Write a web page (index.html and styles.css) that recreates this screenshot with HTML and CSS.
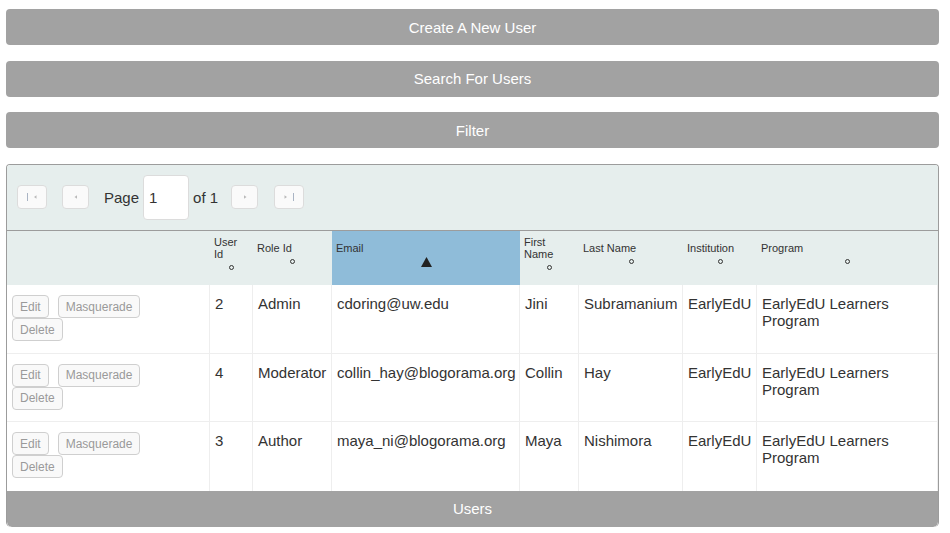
FILE: index.html
```html
<!DOCTYPE html>
<html>
<head>
<meta charset="utf-8">
<title>Users</title>
<link rel="stylesheet" href="styles.css">
</head>
<body>
<div class="page">
  <button class="bar">Create A New User</button>
  <button class="bar">Search For Users</button>
  <button class="bar">Filter</button>
  <div class="grid">
    <div class="pager">
      <button class="pg pg-end"><svg width="14" height="10" viewBox="0 0 14 10"><rect x="2" y="1" width="1" height="8" fill="#a9b4c4"/><path d="M9 5 L11.5 3.3 L11.5 6.7 Z" fill="#b9b9b9"/></svg></button>
      <button class="pg pg-step"><svg width="6" height="10" viewBox="0 0 6 10"><path d="M1.5 5 L4 3.3 L4 6.7 Z" fill="#b9b9b9"/></svg></button>
      <span class="pg-text">Page</span>
      <input class="pg-input" type="text" value="1">
      <span class="pg-text pg-of">of 1</span>
      <button class="pg pg-step pg-next"><svg width="6" height="10" viewBox="0 0 6 10"><path d="M4.5 5 L2 3.3 L2 6.7 Z" fill="#b9b9b9"/></svg></button>
      <button class="pg pg-end pg-last"><svg width="14" height="10" viewBox="0 0 14 10"><path d="M5 5 L2.5 3.3 L2.5 6.7 Z" fill="#b9b9b9"/><rect x="11" y="1" width="1" height="8" fill="#a9b4c4"/></svg></button>
    </div>
    <table class="users">
      <colgroup>
        <col class="c-act"><col class="c-uid"><col class="c-rid"><col class="c-email"><col class="c-first"><col class="c-last"><col class="c-inst"><col class="c-prog">
      </colgroup>
      <thead>
        <tr class="head">
          <th></th>
          <th><span class="lbl">User Id</span><span class="sort"><i class="dot"></i></span></th>
          <th><span class="lbl">Role Id</span><span class="sort"><i class="dot"></i></span></th>
          <th class="sorted"><span class="lbl">Email</span><span class="sort"><svg class="tri" width="11" height="10" viewBox="0 0 11 10"><path d="M5.5 0 L11 10 L0 10 Z" fill="#222"/></svg></span></th>
          <th><span class="lbl">First Name</span><span class="sort"><i class="dot"></i></span></th>
          <th><span class="lbl">Last Name</span><span class="sort"><i class="dot"></i></span></th>
          <th><span class="lbl">Institution</span><span class="sort"><i class="dot"></i></span></th>
          <th><span class="lbl">Program</span><span class="sort"><i class="dot"></i></span></th>
        </tr>
      </thead>
      <tbody>
        <tr>
          <td><div class="acts"><div class="acts-line"><button class="sm">Edit</button><button class="sm">Masquerade</button></div><div class="acts-line"><button class="sm">Delete</button></div></div></td>
          <td>2</td><td>Admin</td><td>cdoring@uw.edu</td><td>Jini</td><td>Subramanium</td><td>EarlyEdU</td><td>EarlyEdU Learners Program</td>
        </tr>
        <tr>
          <td><div class="acts"><div class="acts-line"><button class="sm">Edit</button><button class="sm">Masquerade</button></div><div class="acts-line"><button class="sm">Delete</button></div></div></td>
          <td>4</td><td>Moderator</td><td>collin_hay@blogorama.org</td><td>Collin</td><td>Hay</td><td>EarlyEdU</td><td>EarlyEdU Learners Program</td>
        </tr>
        <tr>
          <td><div class="acts"><div class="acts-line"><button class="sm">Edit</button><button class="sm">Masquerade</button></div><div class="acts-line"><button class="sm">Delete</button></div></div></td>
          <td>3</td><td>Author</td><td>maya_ni@blogorama.org</td><td>Maya</td><td>Nishimora</td><td>EarlyEdU</td><td>EarlyEdU Learners Program</td>
        </tr>
      </tbody>
    </table>
    <div class="foot">Users</div>
  </div>
</div>
</body>
</html>
```
FILE: styles.css
```css
* { box-sizing: border-box; }
html, body { margin: 0; background: #fff; }
body {
  font-family: "Liberation Sans", Arial, sans-serif;
  color: #333;
}
.page {
  padding: 9px 11px 0 6px;
  display: flex;
  flex-direction: column;
  gap: 15.5px;
}
.bar {
  height: 36px;
  background: #a2a2a2;
  color: #fff;
  border: 0;
  border-radius: 4px;
  font: 15px "Liberation Sans", Arial, sans-serif;
  padding: 0;
}
.grid {
  border: 1px solid #9c9c9c;
  border-bottom: 0;
  border-radius: 4px 4px 5px 5px;
  overflow: hidden;
  margin-top: 0.5px;
}
.pager {
  background: #e6eeed;
  height: 66px;
  padding: 10px 0 11px 10px;
  border-bottom: 1px solid #9c9c9c;
  display: flex;
  align-items: center;
}
.pg {
  height: 24px;
  border: 1px solid #dcdcdc;
  background: #fafafa;
  border-radius: 4px;
  padding: 0;
  display: flex;
  align-items: center;
  justify-content: center;
}
.pg-end { width: 30px; }
.pg-step { width: 27px; margin-left: 15px; }
.pg-next { margin-left: 13px; }
.pg-last { margin-left: 16px; }
.pg-text {
  font-size: 15px;
  color: #333;
  margin-left: 15px;
}
.pg-of { margin-left: 4px; }
.pg-input {
  width: 46px;
  height: 45px;
  margin-left: 4px;
  border: 1px solid #dcdcdc;
  border-radius: 4px;
  background: #fff;
  font: 15px "Liberation Sans", Arial, sans-serif;
  color: #333;
  padding: 0 0 0 5px;
  outline: none;
  align-self: stretch;
}
.users {
  width: 931px;
  table-layout: fixed;
  border-collapse: separate;
  border-spacing: 0;
}
.c-act { width: 203px; }
.c-uid { width: 43px; }
.c-rid { width: 79px; }
.c-email { width: 188px; }
.c-first { width: 59px; }
.c-last { width: 104px; }
.c-inst { width: 74px; }
.c-prog { width: 181px; }
.head { height: 54px; background: #e6eeed; }
.head th {
  font-weight: normal;
  font-size: 11px;
  line-height: 12px;
  text-align: left;
  vertical-align: middle;
  padding: 0 4px 6px;
  color: #333;
}
.head th.sorted { background: #8fbcd9; }
.lbl { display: block; }
.sort {
  display: flex;
  justify-content: center;
  align-items: center;
  height: 13px;
  margin-top: 1px;
}
.dot {
  display: block;
  width: 5px;
  height: 5px;
  border: 1px solid #333;
  border-radius: 50%;
}
.tri { display: block; }
.users td {
  font-size: 15px;
  line-height: 17px;
  vertical-align: top;
  padding: 10px 5px 11.5px;
  border-right: 1px solid #eeeeee;
  border-bottom: 1px solid #eeeeee;
  color: #333;
  background: #fff;
}
.users tbody tr:last-child td { border-bottom: 0; padding-bottom: 12.5px; }
.acts { display: flex; flex-direction: column; }
.acts-line { display: flex; gap: 9px; }
.sm {
  height: 23px;
  padding: 0 7px;
  border: 1px solid #cfcfcf;
  border-radius: 4px;
  background: #f9f9f9;
  color: #9a9a9a;
  font: 12px "Liberation Sans", Arial, sans-serif;
}
.foot {
  height: 36px;
  background: #a2a2a2;
  color: #fff;
  font-size: 15px;
  display: flex;
  align-items: center;
  justify-content: center;
  border-radius: 0 0 5px 5px;
}
```
